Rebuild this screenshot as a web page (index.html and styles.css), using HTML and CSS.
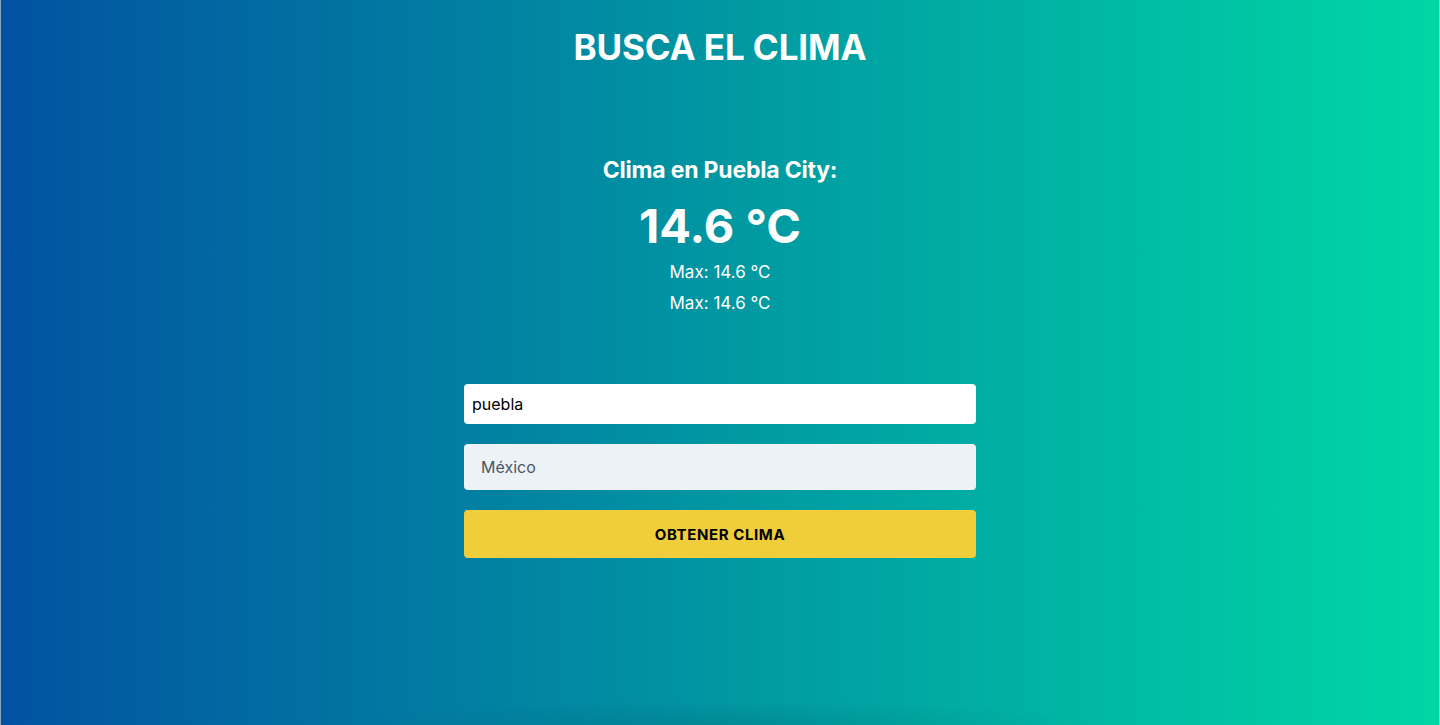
FILE: index.html
```html
<!DOCTYPE html>
<html lang="es">
<head>
<meta charset="utf-8">
<title>Busca el clima</title>
<link rel="stylesheet" href="styles.css">
</head>
<body>
<div class="page">
  <h1 class="title">BUSCA EL CLIMA</h1>
  <section class="result">
    <h2 class="city">Clima en Puebla City:</h2>
    <p class="temp">14.6 °C</p>
    <p class="minmax">Max: 14.6 °C</p>
    <p class="minmax">Max: 14.6 °C</p>
  </section>
  <form class="form">
    <input class="field field-city" type="text" value="puebla">
    <input class="field field-country" type="text" placeholder="México">
    <button class="btn" type="button">OBTENER CLIMA</button>
  </form>
</div>
</body>
</html>
```
FILE: styles.css
```css
* { box-sizing: border-box; }
html, body { margin: 0; padding: 0; }
body {
  font-family: Inter, "Noto Sans", sans-serif;
  color: #fff;
  background: linear-gradient(to right, #0252a1 0%, #0197a2 50%, #00d6a5 100%);
  min-height: 725px;
}
.page {
  min-height: 725px;
  border-left: 1px solid #8aa0b8;
  border-right: 1px solid #8ad8c6;
  display: flex;
  flex-direction: column;
  align-items: center;
  padding-top: 27px;
  background: radial-gradient(ellipse 380px 24px at 50% 100%, rgba(0, 50, 70, 0.14), rgba(0, 50, 70, 0) 100%);
}
.title {
  margin: 0;
  font-size: 35px;
  font-weight: 700;
  line-height: 40px;
  letter-spacing: -0.1px;
}
.result {
  margin-top: 89px;
  display: flex;
  flex-direction: column;
  align-items: center;
}
.city {
  margin: 0;
  font-size: 23px;
  font-weight: 700;
  line-height: 28px;
  letter-spacing: -0.2px;
}
.temp {
  margin: 14px 0 0;
  font-size: 47px;
  font-weight: 700;
  line-height: 56px;
}
.minmax {
  margin: 6px 0 0;
  font-size: 17px;
  line-height: 25px;
}
.form {
  margin-top: 68px;
  width: 512px;
  display: flex;
  flex-direction: column;
  gap: 20px;
}
.field {
  width: 100%;
  border: none;
  border-radius: 4px;
  font-family: Inter, "Noto Sans", sans-serif;
  font-size: 16px;
  outline: none;
}
.field-city {
  height: 40px;
  background: #fff;
  color: #000;
  padding: 0 8px;
}
.field-country {
  height: 46px;
  background: #edf2f7;
  color: #4a5568;
  padding: 0 17px;
}
.field-country::placeholder { color: #4a5568; opacity: 1; }
.btn {
  height: 48px;
  border: none;
  border-radius: 4px;
  background: #f0cd3b;
  color: #000;
  font-family: Inter, "Noto Sans", sans-serif;
  font-weight: 700;
  font-size: 15px;
  letter-spacing: 0.6px;
}
```
